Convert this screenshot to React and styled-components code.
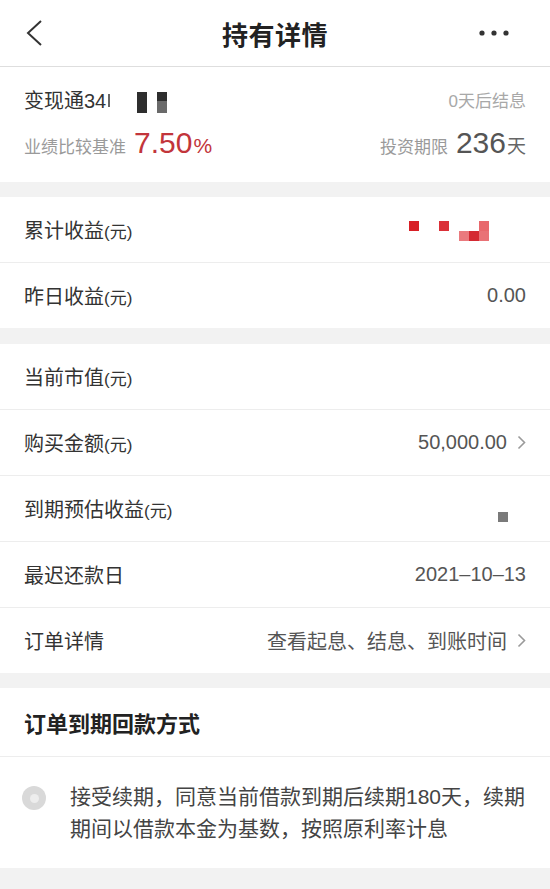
import React from 'react';
import styled, { createGlobalStyle } from 'styled-components';

const FONT = '"Liberation Sans", "Noto Sans CJK SC", sans-serif';

const GlobalStyle = createGlobalStyle`
  html, body {
    margin: 0;
    padding: 0;
    background: #f2f2f2;
  }
  body {
    font-family: ${FONT};
    color: #333;
    -webkit-font-smoothing: antialiased;
  }
`;

const Page = styled.div`
  width: 550px;
  min-height: 889px;
  background: #f2f2f2;
`;

const Header = styled.header`
  height: 66px;
  display: grid;
  grid-template-columns: 1fr auto 1fr;
  align-items: center;
  background: #fff;
  border-bottom: 1px solid #dedede;
`;

const BackBtn = styled.div`
  justify-self: start;
  padding-left: 25px;
  display: flex;
  align-items: center;
`;

const MoreBtn = styled.div`
  justify-self: end;
  padding-right: 41px;
  display: flex;
  align-items: center;
`;

const Title = styled.h1`
  margin: 0;
  font-size: 26px;
  font-weight: 700;
  color: #222;
  letter-spacing: 0.5px;
`;

const InfoCard = styled.section`
  background: #fff;
  padding: 19px 24px 16px;
  margin-bottom: 15px;
  display: flex;
  flex-direction: column;
  gap: 13px;
`;

const InfoLine = styled.div`
  display: flex;
  justify-content: space-between;
  align-items: ${(p) => (p.$baseline ? 'baseline' : 'center')};
  height: ${(p) => p.$h}px;
`;

const ProductName = styled.div`
  display: flex;
  align-items: center;
  font-size: 20px;
  color: #333;
`;

const Stub = styled.span`
  display: inline-block;
  width: 2px;
  height: 13px;
  margin-left: 2px;
  margin-top: 1px;
  background: #666;
`;

const Mask = styled.span`
  display: inline-block;
  width: 10px;
  height: 21px;
  margin-left: ${(p) => p.$ml}px;
  margin-top: 6px;
  background: ${(p) => p.$bg};
`;

const Muted = styled.span`
  font-size: ${(p) => p.$size || 17}px;
  color: ${(p) => p.$color || '#9a9a9a'};
`;

const Stat = styled.div`
  display: flex;
  align-items: baseline;
`;

const Big = styled.span`
  font-size: 30px;
  margin-left: 8px;
  color: ${(p) => p.$color};
`;

const Unit = styled.span`
  font-size: ${(p) => p.$size}px;
  color: ${(p) => p.$color};
  margin-left: 1px;
`;

const Group = styled.section`
  background: #fff;
  margin-bottom: ${(p) => p.$mb}px;
`;

const Row = styled.div`
  height: 65px;
  padding: 0 24px;
  display: flex;
  align-items: center;
  justify-content: space-between;
  border-bottom: 1px solid #ededed;
  &:last-child {
    border-bottom: none;
  }
`;

const Label = styled.span`
  font-size: 20px;
  color: #333;
  small {
    font-size: 17px;
  }
`;

const Value = styled.span`
  display: flex;
  align-items: center;
  gap: 10px;
  font-size: 20px;
  color: #555;
`;

const PixelGrid = styled.span`
  display: grid;
  grid-template-columns: repeat(8, 10px);
  grid-auto-rows: 10px;
  margin-right: 37px;
  margin-top: 2px;
`;

const Pixel = styled.span`
  background: ${(p) => p.$c || 'transparent'};
`;

const GrayBlock = styled.span`
  width: 10px;
  height: 10px;
  background: #7a7a7a;
  margin-right: 18px;
  margin-top: 16px;
`;

const SectionTitle = styled.div`
  height: 68px;
  padding: 0 24px;
  display: flex;
  align-items: center;
  font-size: 22px;
  font-weight: 700;
  color: #222;
  border-bottom: 1px solid #ededed;
`;

const OptionRow = styled.div`
  display: flex;
  align-items: flex-start;
  padding: 24px 22px 23px 22px;
`;

const Radio = styled.span`
  flex: none;
  width: 24px;
  height: 24px;
  margin-top: 5px;
  border-radius: 50%;
  background: #d9d9d9;
  display: flex;
  align-items: center;
  justify-content: center;
  &::after {
    content: '';
    width: 9px;
    height: 9px;
    border-radius: 50%;
    background: #ededed;
  }
`;

const OptionText = styled.p`
  margin: 0 0 0 24px;
  font-size: 21px;
  line-height: 32px;
  color: #444;
`;

const Chevron = () => (
  <svg width="9" height="15" viewBox="0 0 9 15">
    <polyline points="1.5,1.5 7.5,7.5 1.5,13.5" fill="none" stroke="#9a9a9a" strokeWidth="1.6" />
  </svg>
);

export default function App() {
  return (
    <Page>
      <GlobalStyle />
      <Header>
        <BackBtn>
          <svg width="18" height="28" viewBox="0 0 18 28">
            <polyline points="16,2 3,14 16,26" fill="none" stroke="#333" strokeWidth="2" strokeLinejoin="miter" />
          </svg>
        </BackBtn>
        <Title>持有详情</Title>
        <MoreBtn>
          <svg width="30" height="6" viewBox="0 0 30 6">
            <circle cx="3" cy="3" r="2.6" fill="#333" />
            <circle cx="15" cy="3" r="2.6" fill="#333" />
            <circle cx="27" cy="3" r="2.6" fill="#333" />
          </svg>
        </MoreBtn>
      </Header>

      <InfoCard>
        <InfoLine $h={27}>
          <ProductName>
            变现通34<Stub />
            <Mask $ml={27} $bg="#2e2e2e" />
            <Mask $ml={10} $bg="linear-gradient(#2e2e2e 45%, #6a6a6a 45%)" />
          </ProductName>
          <Muted $color="#a8a8a8">0天后结息</Muted>
        </InfoLine>
        <InfoLine $h={40} $baseline>
          <Stat>
            <Muted>业绩比较基准</Muted>
            <Big $color="#c2353b">7.50</Big>
            <Unit $size={21} $color="#c2353b">%</Unit>
          </Stat>
          <Stat>
            <Muted>投资期限</Muted>
            <Big $color="#555">236</Big>
            <Unit $size={19} $color="#666">天</Unit>
          </Stat>
        </InfoLine>
      </InfoCard>

      <Group $mb={16}>
        <Row>
          <Label>累计收益<small>(元)</small></Label>
          <PixelGrid>
            <Pixel $c="#d81f26" /><Pixel /><Pixel /><Pixel $c="#db3038" /><Pixel /><Pixel /><Pixel /><Pixel $c="#e8686c" />
            <Pixel /><Pixel /><Pixel /><Pixel /><Pixel /><Pixel $c="#ea7a7e" /><Pixel $c="#d42a32" /><Pixel $c="#e97276" />
          </PixelGrid>
        </Row>
        <Row>
          <Label>昨日收益<small>(元)</small></Label>
          <Value>0.00</Value>
        </Row>
      </Group>

      <Group $mb={15}>
        <Row>
          <Label>当前市值<small>(元)</small></Label>
        </Row>
        <Row>
          <Label>购买金额<small>(元)</small></Label>
          <Value>50,000.00<Chevron /></Value>
        </Row>
        <Row>
          <Label>到期预估收益<small>(元)</small></Label>
          <GrayBlock />
        </Row>
        <Row>
          <Label>最迟还款日</Label>
          <Value>2021–10–13</Value>
        </Row>
        <Row>
          <Label>订单详情</Label>
          <Value>查看起息、结息、到账时间<Chevron /></Value>
        </Row>
      </Group>

      <Group $mb={0}>
        <SectionTitle>订单到期回款方式</SectionTitle>
        <OptionRow>
          <Radio />
          <OptionText>
            接受续期，同意当前借款到期后续期180天，续期期间以借款本金为基数，按照原利率计息
          </OptionText>
        </OptionRow>
      </Group>
    </Page>
  );
}
